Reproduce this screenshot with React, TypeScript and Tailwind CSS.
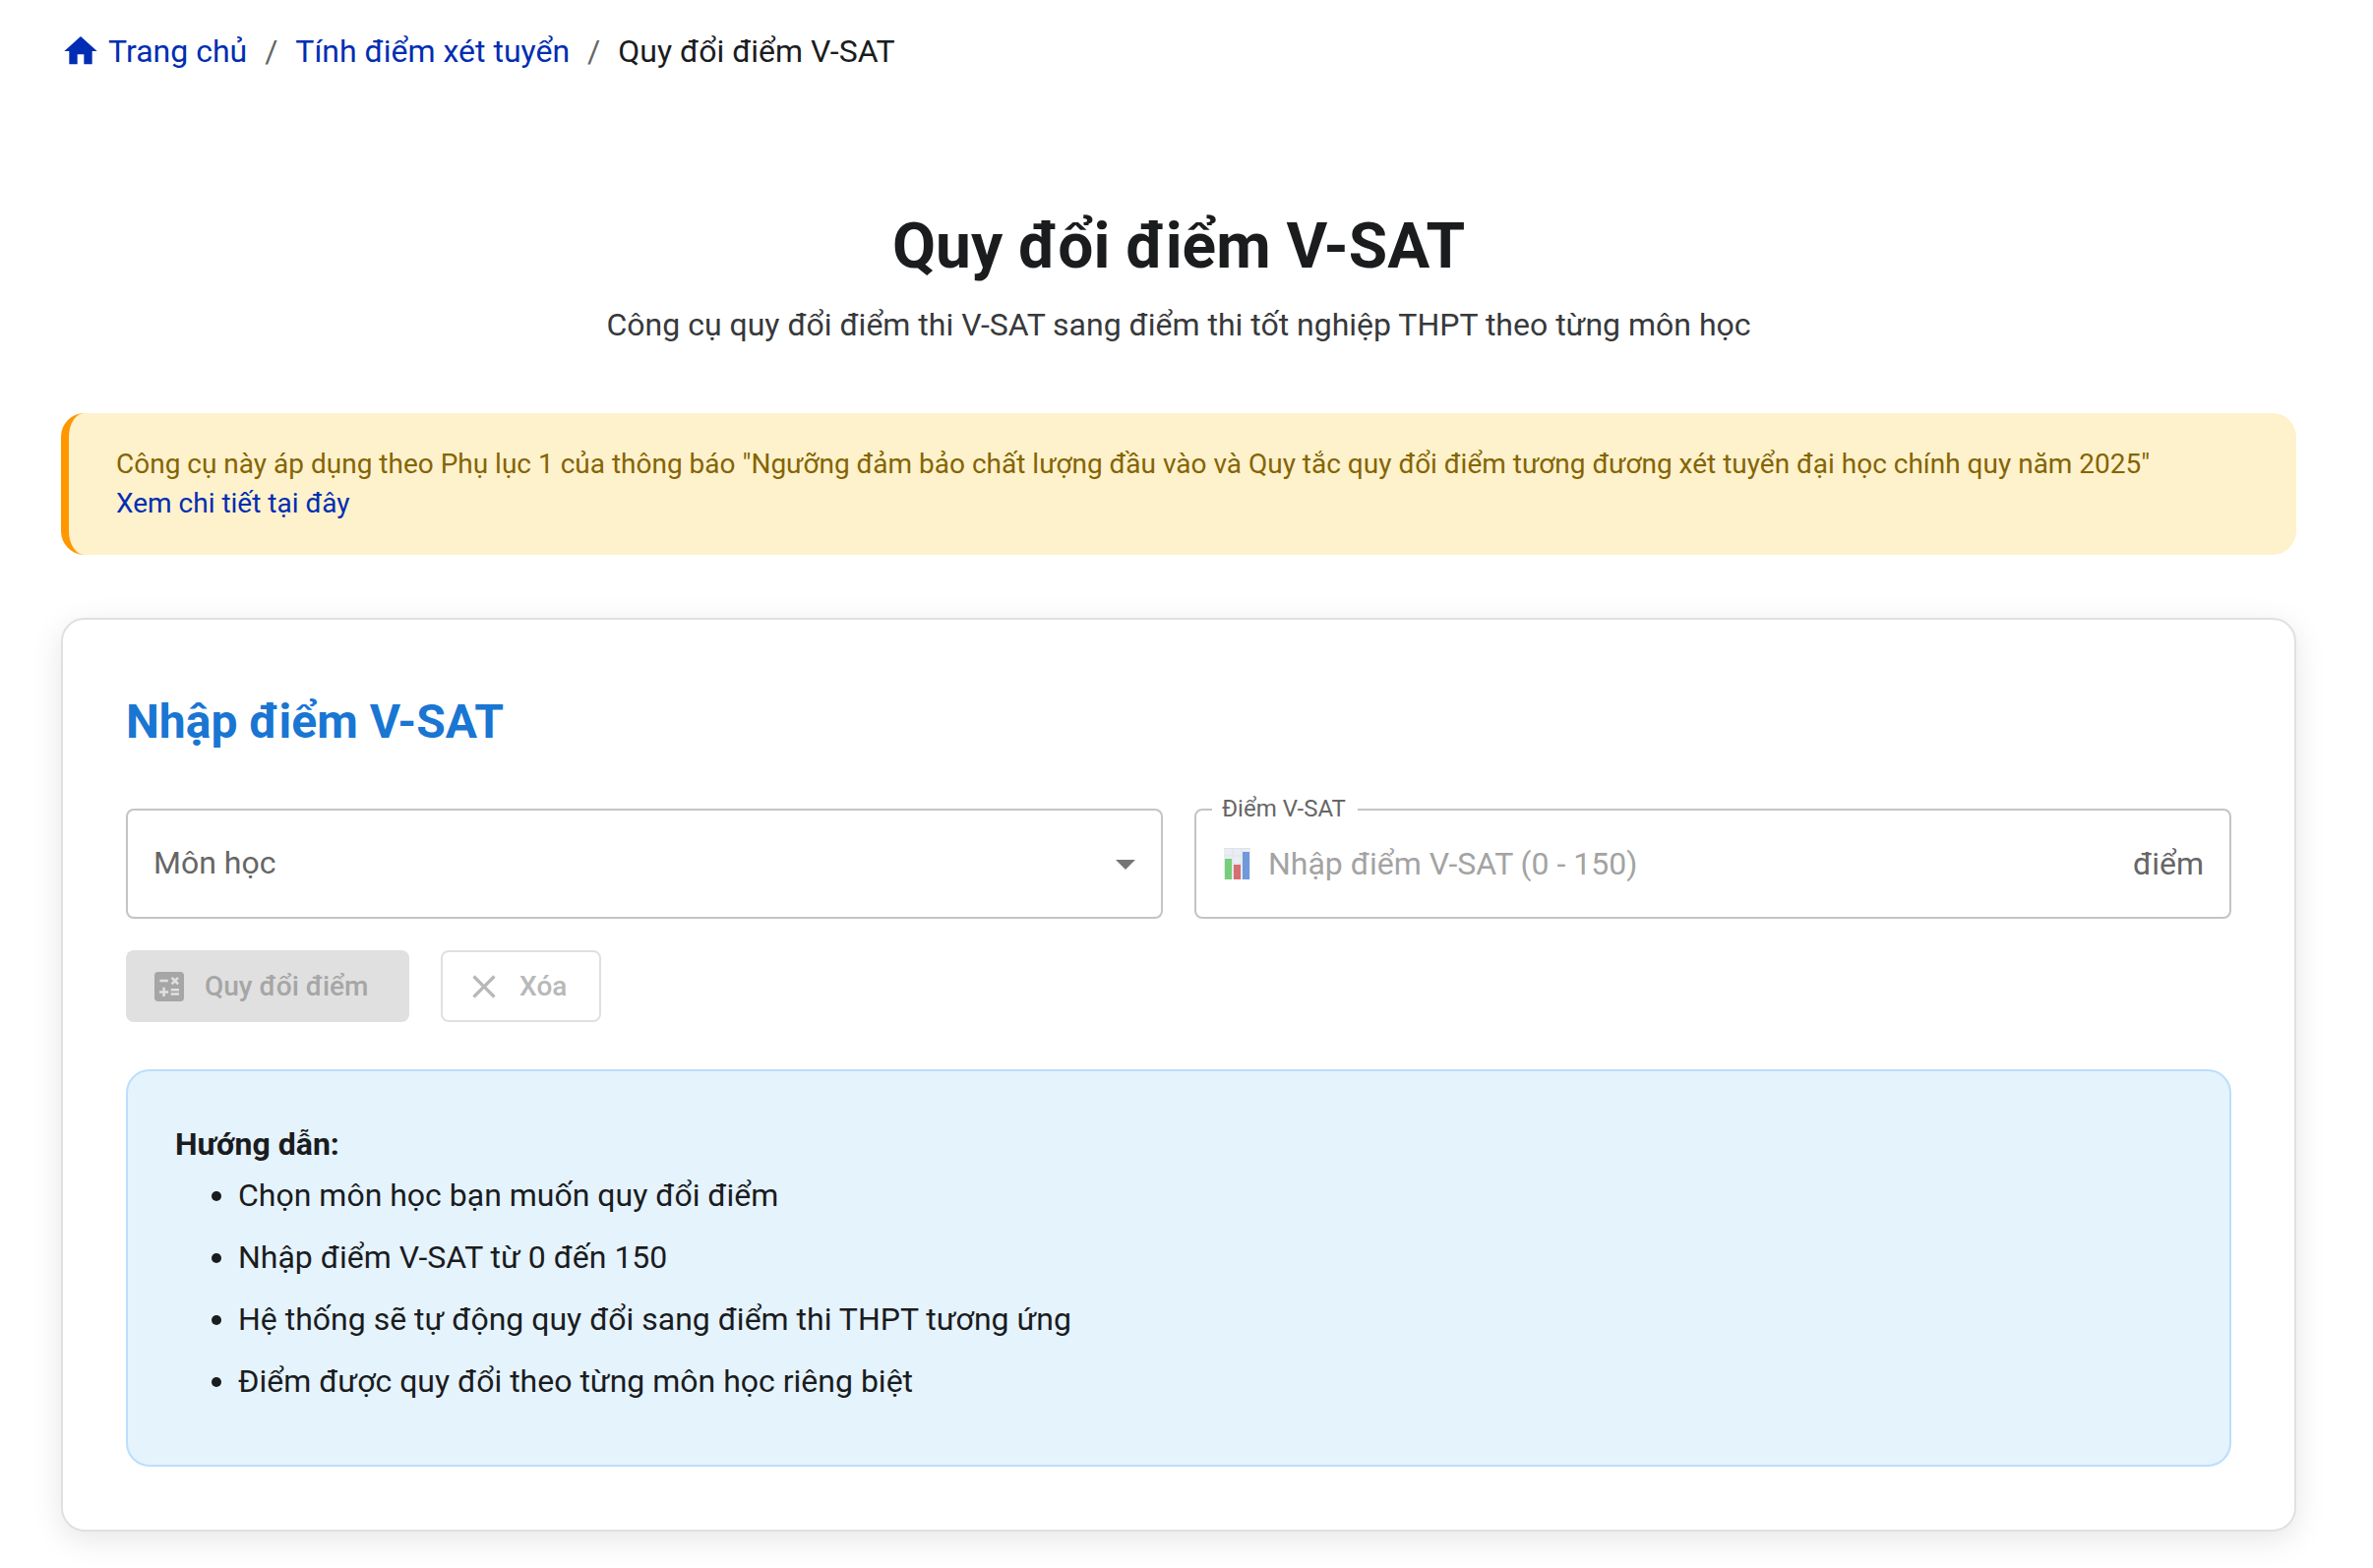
import { useState } from "react";
import { MdArrowDropDown, MdCalculate, MdClose, MdHome } from "react-icons/md";

const SUBJECTS = ["Toán", "Vật lí", "Hóa học", "Sinh học", "Lịch sử", "Địa lí", "Tiếng Anh", "Ngữ văn"];

const GUIDE = [
  "Chọn môn học bạn muốn quy đổi điểm",
  "Nhập điểm V-SAT từ 0 đến 150",
  "Hệ thống sẽ tự động quy đổi sang điểm thi THPT tương ứng",
  "Điểm được quy đổi theo từng môn học riêng biệt",
];

function ChartIcon() {
  return (
    <svg className="w-[27px] h-8 shrink-0" viewBox="0 0 27 32" aria-hidden="true">
      <rect width="27" height="32" fill="#e9eef3" />
      <path d="M0 .5h27M0 8h27M0 16h27M0 24h27M9 0v32M18 0v32" stroke="#dde3e9" fill="none" />
      <rect x="1" y="11" width="7" height="21" fill="#76cf78" />
      <rect x="10" y="17" width="7" height="15" fill="#d66f70" />
      <rect x="19" y="4" width="7" height="28" fill="#7099dc" />
    </svg>
  );
}

function Breadcrumb() {
  return (
    <nav aria-label="Breadcrumb" className="text-[32px] leading-[48px]">
      <ol className="flex items-center gap-[18px]">
        <li>
          <a href="#" className="flex items-center gap-2 text-[#002db3]">
            <MdHome className="size-10" />
            Trang chủ
          </a>
        </li>
        <li aria-hidden="true" className="text-[#666666]">/</li>
        <li>
          <a href="#" className="text-[#002db3]">Tính điểm xét tuyển</a>
        </li>
        <li aria-hidden="true" className="text-[#666666]">/</li>
        <li aria-current="page">Quy đổi điểm V-SAT</li>
      </ol>
    </nav>
  );
}

export default function App() {
  const [subject, setSubject] = useState("");
  const [score, setScore] = useState("");
  const ready = subject !== "" && score !== "";
  const dirty = subject !== "" || score !== "";

  const reset = () => {
    setSubject("");
    setScore("");
  };

  return (
    <main className="bg-white pl-[62px] pr-[78px] pt-7 pb-9 font-['Roboto',sans-serif] text-[#1a1c1e]">
      <Breadcrumb />

      <header className="mt-[135px] text-center">
        <h1 className="text-[64px] leading-[80px] font-bold">Quy đổi điểm V-SAT</h1>
        <p className="mt-[15px] text-[32px] leading-[48px] text-[#37393b]">
          Công cụ quy đổi điểm thi V-SAT sang điểm thi tốt nghiệp THPT theo từng môn học
        </p>
      </header>

      <div className="mt-[66px] rounded-3xl border-l-8 border-[#ff9800] bg-[#fef2cc] px-12 py-8 text-[28px] leading-10 text-[#856404]">
        <p>
          Công cụ này áp dụng theo Phụ lục 1 của thông báo "Ngưỡng đảm bảo chất lượng đầu vào và Quy tắc quy đổi điểm
          tương đương xét tuyển đại học chính quy năm 2025"
        </p>
        <a href="#" className="text-[#002db3]">Xem chi tiết tại đây</a>
      </div>

      <section className="mt-16 rounded-3xl border-2 border-[#e0e0e0] bg-white p-16 shadow-[0_8px_32px_rgba(0,0,0,0.1)]">
        <h2 className="text-[48px] leading-[80px] font-bold text-[#1976d2]">Nhập điểm V-SAT</h2>

        <form onSubmit={(e) => e.preventDefault()}>
          <div className="mt-12 grid grid-cols-2 gap-8">
            <div className="relative">
              <select
                aria-label="Môn học"
                value={subject}
                onChange={(e) => setSubject(e.target.value)}
                className="h-28 w-full appearance-none rounded-lg border-2 border-[#c4c4c4] bg-white px-[26px] pb-[2px] text-[32px] text-[#666666]"
              >
                <option value="">Môn học</option>
                {SUBJECTS.map((s) => (
                  <option key={s} value={s}>{s}</option>
                ))}
              </select>
              <MdArrowDropDown className="pointer-events-none absolute right-[14px] top-8 size-12 text-[#757575]" />
            </div>

            <div className="relative flex h-28 items-center rounded-lg border-2 border-[#c4c4c4] pl-7 pr-[26px]">
              <label
                htmlFor="score"
                className="absolute -top-[14px] left-4 bg-white pl-[10px] pr-3 text-2xl leading-6 text-[#666666]"
              >
                Điểm V-SAT
              </label>
              <ChartIcon />
              <input
                id="score"
                inputMode="decimal"
                value={score}
                onChange={(e) => setScore(e.target.value)}
                placeholder="Nhập điểm V-SAT (0 - 150)"
                className="ml-[18px] min-w-0 flex-1 text-[32px] outline-none placeholder:text-[#a3a3a3]"
              />
              <span className="text-[32px] text-[#666666]">điểm</span>
            </div>
          </div>

          <div className="mt-8 flex gap-8 text-[28px] font-medium">
            <button
              type="submit"
              disabled={!ready}
              className="flex h-[73px] min-w-[288px] items-center gap-4 rounded-lg bg-[#1976d2] pl-6 pr-8 text-white disabled:bg-[#e0e0e0] disabled:text-[#a6a6a6]"
            >
              <MdCalculate className="size-10" />
              Quy đổi điểm
            </button>
            <button
              type="button"
              disabled={!dirty}
              onClick={reset}
              className="flex h-[73px] min-w-[163px] items-center gap-4 rounded-lg border-2 border-[#1976d2] pl-[22px] pr-[30px] text-[#1976d2] disabled:border-[#e0e0e0] disabled:text-[#b8b8b8]"
            >
              <MdClose className="size-10" />
              Xóa
            </button>
          </div>
        </form>

        <div className="mt-12 rounded-3xl border-2 border-[#bbdefb] bg-[#e5f3fd] p-12 text-[32px] leading-[52px]">
          <strong className="block font-bold">Hướng dẫn:</strong>
          <ul className="list-disc pl-16">
            {GUIDE.map((line) => (
              <li key={line} className="mb-[11px]">{line}</li>
            ))}
          </ul>
        </div>
      </section>
    </main>
  );
}
